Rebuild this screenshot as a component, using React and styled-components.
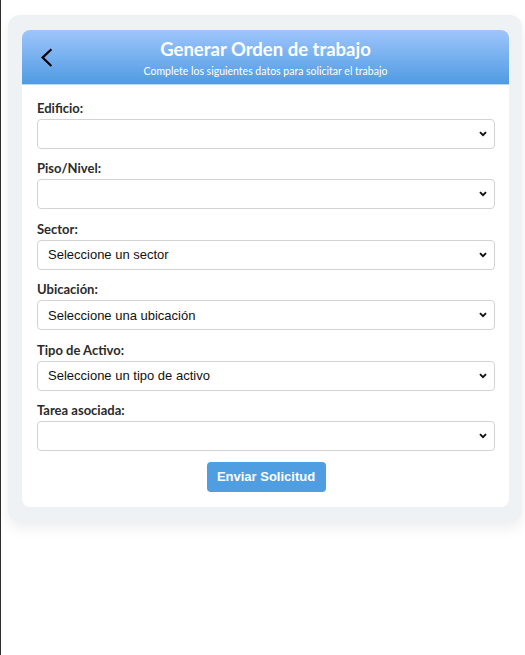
import React from "react";
import styled, { createGlobalStyle } from "styled-components";

const Global = createGlobalStyle`
  html, body { margin: 0; padding: 0; background: #fff; }
  body { border-left: 1px solid #2e2e2e; min-height: 655px; box-sizing: border-box; }
  * { box-sizing: border-box; }
`;

const chevron =
  "url(\"data:image/svg+xml;utf8,<svg xmlns='http://www.w3.org/2000/svg' width='8' height='6' viewBox='0 0 8 6'><path d='M1 1.2 L4 4.2 L7 1.2' fill='none' stroke='%23111' stroke-width='1.9'/></svg>\")";

const Panel = styled.div`
  margin: 15px 3px 0 7px;
  padding: 15px 13px 15px 14px;
  background: #eef2f5;
  border-radius: 12px;
  box-shadow: 0 6px 14px rgba(0, 0, 0, 0.07);
`;

const Card = styled.div`
  background: #fff;
  border-radius: 8px;
  overflow: hidden;
`;

const Header = styled.div`
  display: grid;
  grid-template-columns: 44px 1fr 44px;
  align-items: center;
  height: 55px;
  padding: 0 14px;
  background: linear-gradient(to bottom, #9fc5fc, #4f9be2);
  border-bottom: 1px solid #b9d8f6;
`;

const BackButton = styled.button`
  display: flex;
  align-items: center;
  justify-content: flex-start;
  padding: 0;
  margin: 0;
  border: none;
  background: transparent;
  cursor: pointer;
  height: 30px;
`;

const TitleBlock = styled.div`
  display: flex;
  flex-direction: column;
  align-items: center;
  color: #fff;
`;

const Title = styled.h1`
  margin: 0;
  font-family: "Lato", "Noto Sans", sans-serif;
  font-weight: 700;
  font-size: 18.5px;
  line-height: 24px;
`;

const Subtitle = styled.p`
  margin: 4px 0 0;
  font-family: "Lato", "Noto Sans", sans-serif;
  font-size: 10.5px;
  line-height: 13px;
`;

const Form = styled.form`
  display: flex;
  flex-direction: column;
  padding: 15px 14px 15px 15px;
`;

const Field = styled.div`
  display: flex;
  flex-direction: column;
  margin-bottom: 11.4px;
  &:last-of-type { margin-bottom: 11px; }
`;

const Label = styled.label`
  font-family: "Lato", "Noto Sans", sans-serif;
  font-weight: 700;
  font-size: 13px;
  line-height: 17px;
  color: #2b2b2b;
  margin-bottom: 2px;
`;

const Select = styled.select`
  appearance: none;
  -webkit-appearance: none;
  height: 30px;
  width: 100%;
  padding: 0 24px 0 10px;
  font-family: "Liberation Sans", Arial, sans-serif;
  font-size: 13px;
  color: #111;
  background-color: #fff;
  background-image: ${chevron};
  background-repeat: no-repeat;
  background-position: right 7px center;
  border: 1px solid #d3d3d3;
  border-radius: 4px;
`;

const Submit = styled.button`
  align-self: center;
  width: 119px;
  height: 30px;
  border: none;
  border-radius: 4px;
  background: #4f9ee1;
  color: #fff;
  font-family: "Liberation Sans", Arial, sans-serif;
  font-weight: 700;
  font-size: 13px;
  cursor: pointer;
`;

const fields = [
  { label: "Edificio:", placeholder: "" },
  { label: "Piso/Nivel:", placeholder: "" },
  { label: "Sector:", placeholder: "Seleccione un sector" },
  { label: "Ubicación:", placeholder: "Seleccione una ubicación" },
  { label: "Tipo de Activo:", placeholder: "Seleccione un tipo de activo" },
  { label: "Tarea asociada:", placeholder: "" },
];

export default function App() {
  return (
    <>
      <Global />
      <Panel>
        <Card>
          <Header>
            <BackButton type="button" aria-label="Volver">
              <svg width="24" height="24" viewBox="0 0 24 24" fill="none">
                <path d="M14.6 5 L6.6 12.6 L14.6 20.2" stroke="#000" strokeWidth="2.2" strokeLinecap="square" />
              </svg>
            </BackButton>
            <TitleBlock>
              <Title>Generar Orden de trabajo</Title>
              <Subtitle>Complete los siguientes datos para solicitar el trabajo</Subtitle>
            </TitleBlock>
            <span />
          </Header>
          <Form onSubmit={(e) => e.preventDefault()}>
            {fields.map((f, i) => (
              <Field key={i}>
                <Label>{f.label}</Label>
                <Select defaultValue="">
                  <option value="">{f.placeholder}</option>
                </Select>
              </Field>
            ))}
            <Submit type="submit">Enviar Solicitud</Submit>
          </Form>
        </Card>
      </Panel>
    </>
  );
}
